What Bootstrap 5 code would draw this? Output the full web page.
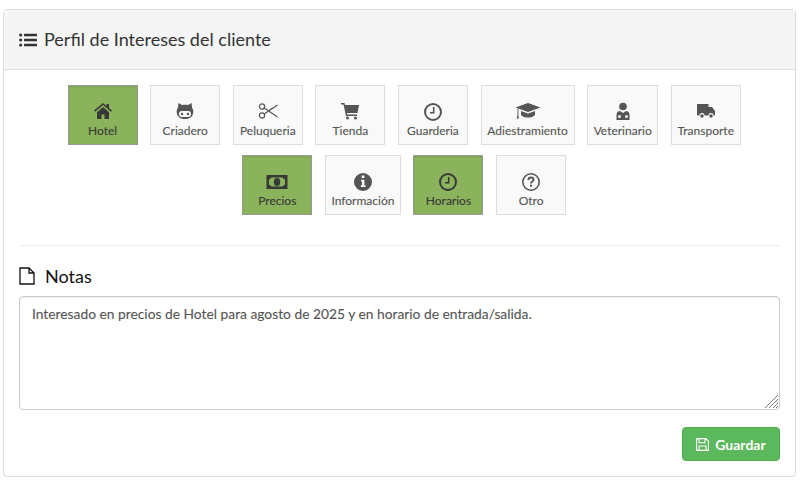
<!DOCTYPE html>
<html lang="es"><head><meta charset="utf-8"><title>Perfil</title>
<link href="https://cdn.jsdelivr.net/npm/bootstrap@5.3.0/dist/css/bootstrap.min.css" rel="stylesheet">
<style>
body{font-family:Lato,"Liberation Sans",sans-serif;background:#fff;color:#555;}
.panel-box{margin:9px 15px 0 3px;height:468px;border:1px solid #ddd;border-radius:4px;box-shadow:0 1px 1px rgba(0,0,0,.05);--bs-card-border-color:#ddd;--bs-card-border-radius:4px;--bs-card-inner-border-radius:3px}
.panel-head{height:60px;background:#f5f5f5;border-bottom:1px solid #ddd;padding:0 15px;color:#333;font-size:18px;gap:7px}
.panel-main{padding:15px 15px 0}
.tile-wrap{padding-left:9.4px;column-gap:12.6px;row-gap:10px;height:130px}
.tile{width:70px;height:60px;background:#f9f9f9;border:1px solid #ddd;color:#555;font-size:12px;font-weight:400;line-height:16px;padding:14px 0 0;display:flex;flex-direction:column;align-items:center;white-space:nowrap;-webkit-text-stroke:.12px currentColor}
.tile.wide{width:94px}.tile.mid{width:71px}.tile.info{width:76px}
.tile.on{background:#8ab35c;border-color:#999;color:#383838;box-shadow:inset 0 1px 2px rgba(0,0,0,.1)}
.tile svg{width:20px;height:20px;flex:none;margin-bottom:3px;fill:currentColor;stroke:none;overflow:visible}
.tile svg.line{fill:none;stroke:currentColor}
.tile svg.w26{width:26px}.tile svg.w22{width:22px}
.sep{margin:30px 0 19px;border-color:#eee;opacity:1}
.notes-title{font-size:18px;line-height:22px;color:#111;gap:10px;margin:0 0 9px;font-weight:400}
.notes-box{height:114px}
.notes{height:114px;border:1px solid #ccc;border-radius:4px;padding:7px 12px;font-size:13.8px;line-height:20px;color:#555;box-shadow:inset 0 1px 1px rgba(0,0,0,.075);-webkit-text-stroke:.12px currentColor;resize:none}
.grip{position:absolute;right:2px;bottom:2px}
.save-btn{width:98px;height:34px;margin-top:17px;background:#5cb85c;border:1px solid #4cae4c;border-radius:4px;color:#fff;font-size:14px;font-weight:700;gap:6px;padding:0}
.save-btn:hover{background:#5cb85c;border-color:#4cae4c;color:#fff}
</style></head><body>
<div class="card panel-box">
<div class="panel-head d-flex align-items-center">
<svg width="18" height="14" viewBox="0 0 18 14" fill="#333"><circle cx="1.7" cy="2" r="1.6"/><circle cx="1.7" cy="7" r="1.6"/><circle cx="1.7" cy="12" r="1.6"/><rect x="5" y=".8" width="13" height="2.5" rx=".4"/><rect x="5" y="5.8" width="13" height="2.5" rx=".4"/><rect x="5" y="10.8" width="13" height="2.5" rx=".4"/></svg>
<span>Perfil de Intereses del cliente</span></div>
<div class="panel-main">
<div class="tile-wrap d-flex flex-wrap justify-content-center align-content-start">
<div class="tile on"><svg viewBox="0 0 20 20"><path d="M10 3 1 10.600l1 1.200L10 5l8 6.800 1-1.200-3-2.500V4h-2.500v2zM4 12.200V19h4.500v-4.500h3V19H16v-6.800L10 7z"/></svg>Hotel</div>
<div class="tile"><svg viewBox="0 0 20 20"><path fill-rule="evenodd" d="M3.500 3 7 5c2-.5 4-.5 6 0l3.500-2 .6 5c.8 1 1.200 2 1.200 3.500 0 5-3.300 7.500-8.300 7.500s-8.300-2.500-8.300-7.500c0-1.500.4-2.500 1.200-3.500zM6.500 11C4.800 11 4 12 4 14s.8 3 2.500 3h7c1.700 0 2.500-1 2.500-3s-.8-3-2.500-3z"/><circle cx="7" cy="14" r="1.200"/><circle cx="13" cy="14" r="1.200"/></svg>Criadero</div>
<div class="tile"><svg class="line" viewBox="0 0 20 20" stroke-width="1.200"><circle cx="4" cy="6.500" r="2.600"/><circle cx="4" cy="15.500" r="2.600"/><path d="M6.200 8 19.500 17M6.200 14 19.500 5M17 6.700l-5.500 3.300"/></svg>Peluqueria</div>
<div class="tile"><svg viewBox="0 0 20 20"><path d="M1 3h3.500l.5 2h14l-1.500 8H7l.3 1.500H17V16H6L3.500 4.500H1z"/><circle cx="7.500" cy="18" r="1.500"/><circle cx="15.500" cy="18" r="1.500"/></svg>Tienda</div>
<div class="tile"><svg class="line" viewBox="0 0 20 20" stroke-width="2"><circle cx="10" cy="12" r="8"/><path d="M10.700 7V12.700H7" stroke-width="1.600"/></svg>Guarderia</div>
<div class="tile wide"><svg class="w26" viewBox="0 0 26 20"><path d="M13 3 .5 7.500 13 12l12.500-4.500zM2.500 8.500V15l-.8 3.500h2.200l-.5-3.500V9zM6 11v3.500c0 1.500 3 3 7 3s7-1.500 7-3V11l-7 2.500z"/></svg>Adiestramiento</div>
<div class="tile mid"><svg viewBox="0 0 20 20"><circle cx="10" cy="6.500" r="3.800"/><path fill-rule="evenodd" d="M3.500 20v-5C3.500 12.500 5 11 7 11l3 2 3-2c2 0 3.500 1.500 3.500 4v5zM6.500 15a1.500 1.500 0 1 0 0 3 1.500 1.500 0 0 0 0-3zM13.500 15a1.500 1.500 0 1 0 0 3 1.500 1.500 0 0 0 0-3z"/></svg>Veterinario</div>
<div class="tile"><svg viewBox="0 0 20 20"><path d="M1 4h11.500v3H16l3 4v4.500h-1.500a2.500 2.500 0 0 0-5 0h-4a2.500 2.500 0 0 0-5 0H1z"/><circle cx="6" cy="16" r="1.700"/><circle cx="15" cy="16" r="1.700"/></svg>Transporte</div>
<div class="tile on"><svg class="w22" viewBox="0 0 22 20"><path fill-rule="evenodd" d="M.5 5h21v14H.5zM5 7.500c0 1-.8 1.800-2 1.800v5.400c1.200 0 2 .8 2 1.800h12c0-1 .8-1.800 2-1.800V9.300c-1.200 0-2-.8-2-1.800z"/><ellipse cx="11" cy="12" rx="3.200" ry="4"/></svg>Precios</div>
<div class="tile info"><svg viewBox="0 0 20 20"><path fill-rule="evenodd" d="M10 3a9 9 0 1 0 0 18 9 9 0 0 0 0-18zM8.700 5.500h2.700v2.500H8.700zM8 9.800h3.400v5.400h1.200V17H7.800v-1.800H9v-3.600H8z"/></svg>Información</div>
<div class="tile on"><svg class="line" viewBox="0 0 20 20" stroke-width="2"><circle cx="10" cy="12" r="8"/><path d="M10.700 7V12.700H7" stroke-width="1.600"/></svg>Horarios</div>
<div class="tile"><svg class="line" viewBox="0 0 20 20" stroke-width="1.600"><circle cx="10" cy="12" r="8.200"/><path d="M7.400 10c0-1.700 1.200-2.500 2.600-2.500s2.600.9 2.600 2.200c0 1.900-2.600 1.900-2.600 3.800" stroke-width="1.800"/><path d="M10 14.700v2" stroke-width="2"/></svg>Otro</div>
</div>
<hr class="sep">
<h4 class="notes-title d-flex align-items-center"><svg width="16" height="18" viewBox="0 0 16 18" fill="none" stroke="#111" stroke-width="1.300"><path d="M1 1h9l5 5v11H1zM10 1v5h5"/></svg>Notas</h4>
<div class="notes-box position-relative"><textarea class="form-control notes">Interesado en precios de Hotel para agosto de 2025 y en horario de entrada/salida.</textarea>
<svg class="grip" width="13" height="13" viewBox="0 0 13 13" stroke="#777" stroke-width="1"><path d="M0 13 13 0M4 13l9-9M8 13l5-5M11 13l2-2"/></svg></div>
<div class="d-flex justify-content-end"><button class="btn save-btn d-flex align-items-center justify-content-center"><svg width="13" height="13" viewBox="0 0 13 13" fill="none" stroke="#fff" stroke-width="1.100"><path d="M.6.600h9.300l2.500 2.500v9.300H.6zM3 .6v4h6v-4M3 12.400V8h7v4.400"/></svg>Guardar</button></div>
</div></div>
</body></html>
